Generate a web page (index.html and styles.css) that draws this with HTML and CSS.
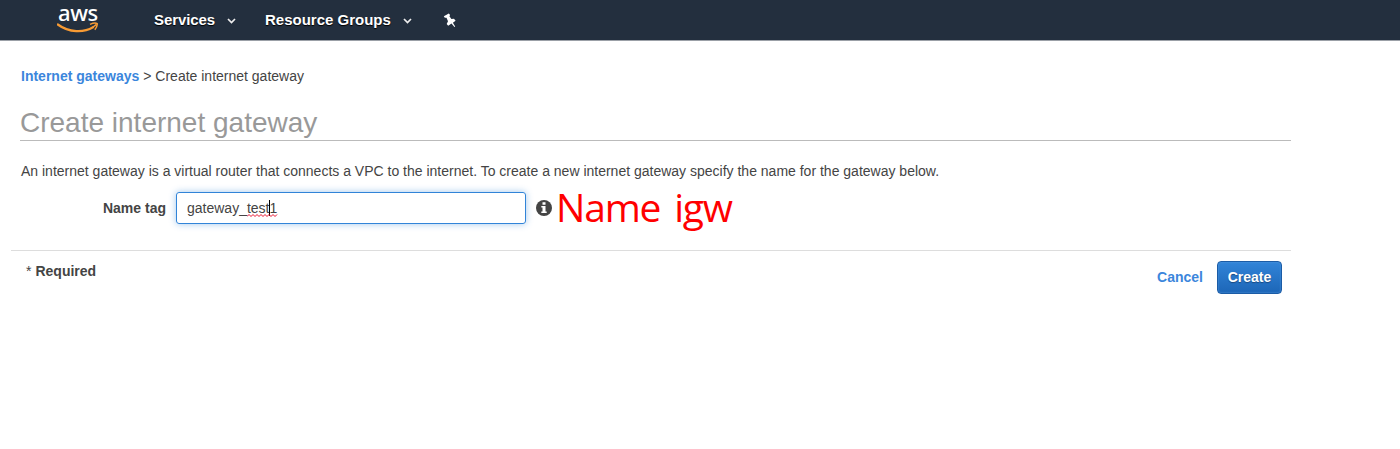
FILE: index.html
```html
<!DOCTYPE html>
<html lang="en">
<head>
<meta charset="utf-8">
<title>Create internet gateway</title>
<link rel="stylesheet" href="styles.css">
</head>
<body>
<header class="topbar">
  <a class="logo"><span class="logo-text">aws</span>
    <svg class="smile" width="42" height="11" viewBox="0 0 42 11"><path d="M.8 2.500C12 10.800 27 10.800 36 5.200" fill="none" stroke="#f79b34" stroke-width="2.200" stroke-linecap="round"/><path d="M33 2.400c3-1.300 6-1.500 7.200-.7.200 1.800-.7 4-2.400 6" fill="none" stroke="#f79b34" stroke-width="1.500"/><path d="M35.500 5.500L39.500 2.300" stroke="#f79b34" stroke-width="1.600"/></svg>
  </a>
  <nav class="nav">
    <a class="nav-item services">Services<svg class="chevron" width="9" height="6" viewBox="0 0 9 6"><path d="M1 1l3.500 3.500L8 1" fill="none" stroke="#eee" stroke-width="1.700"/></svg></a>
    <a class="nav-item groups">Resource Groups<svg class="chevron" width="9" height="6" viewBox="0 0 9 6"><path d="M1 1l3.500 3.500L8 1" fill="none" stroke="#eee" stroke-width="1.700"/></svg></a>
    <svg class="pin" width="14" height="15" viewBox="0 0 14 15"><path d="M.8 3.200L5.800.5l1.300 1.600-.7 1.100 2 2.900 2.600-.3 1.600 2-2.700 1.900 2.300 3.800-.8.500-2.900-3.400-3.300 2.200-1.500-1.900 1.300-2.600-1.500-3.500-1.700-.1z" fill="#fff"/></svg>
  </nav>
</header>
<main class="page">
  <div class="crumbs"><a class="link">Internet gateways</a><span class="crumb-rest">&gt; Create internet gateway</span></div>
  <h1 class="title">Create internet gateway</h1>
  <p class="intro">An internet gateway is a virtual router that connects a VPC to the internet. To create a new internet gateway specify the name for the gateway below.</p>
  <div class="field">
    <label class="label">Name tag</label>
    <div class="input"><span>gateway_</span><span class="misspelt">test<i class="caret"></i>1<svg class="wave" width="31" height="3" viewBox="0 0 31 3"><path d="M0 2.500l2-2 2 2 2-2 2 2 2-2 2 2 2-2 2 2 2-2 2 2 2-2 2 2 2-2 2 2 2-2" fill="none" stroke="#e8112d"/></svg></span></div>
    <svg class="info" width="16" height="16" viewBox="0 0 16 16"><circle cx="8" cy="8" r="8" fill="#444"/><path d="M6.500 2.300h3v2.400h-3zM5.300 6h4.200v5.400h1.200V13H5.300v-1.600h1.200V7.600H5.300z" fill="#fff"/></svg>
    <span class="note">Name igw</span>
  </div>
  <footer class="actions">
    <div class="required"><span class="star">*</span>Required</div>
    <div class="buttons"><a class="link cancel">Cancel</a><button class="create">Create</button></div>
  </footer>
</main>
</body>
</html>
```
FILE: styles.css
```css
* { box-sizing: border-box; }
body {
  margin: 0;
  background: #fff;
  color: #444;
  font: 14px/20px "Liberation Sans", Arial, sans-serif;
}
.topbar {
  display: flex;
  height: 41px;
  background: #232f3e;
  border-bottom: 1px solid #9ba0a7;
}
.logo { width: 42px; margin-left: 57px; display: flex; flex-direction: column; }
.logo-text {
  height: 22px;
  color: #fff;
  text-align: center;
  font: 500 22px/24px "Noto Sans", sans-serif;
  letter-spacing: -.4px;
}
.nav { display: flex; align-items: center; height: 40px; margin-left: 55px; color: #fff; }
.nav-item { display: flex; align-items: center; font-size: 15px; font-weight: bold; text-shadow: 0 1px 1px #000; }
.services { width: 111px; letter-spacing: -.1px; }
.groups { width: 178px; }
.chevron { margin: 2px 0 0 12px; }
.page { padding: 25px 0 0 11px; width: 1291px; }
.crumbs { display: flex; gap: 4px; margin-left: 10px; }
.link { color: #3b86dc; font-weight: bold; }
.title {
  height: 34px;
  margin: 21px 0 0 9px;
  border-bottom: 1px solid #bbb;
  color: #999;
  font-weight: normal;
  font-size: 28px;
  line-height: 31px;
}
.intro { margin: 20px 0 0 10px; white-space: nowrap; }
.field { display: flex; align-items: center; height: 32px; margin-top: 11px; }
.label { width: 155px; text-align: right; font-weight: bold; }
.input {
  display: flex;
  align-items: center;
  width: 350px;
  height: 32px;
  margin-left: 10px;
  padding-left: 10px;
  border: 1px solid #3184d8;
  border-radius: 3px;
  box-shadow: 0 0 7px rgba(49, 132, 216, .45);
}
.misspelt { position: relative; }
.caret { position: absolute; left: 22px; top: 2px; width: 1px; height: 16px; background: #000; }
.wave { position: absolute; left: 0; bottom: 1px; }
.info { margin-left: 10px; }
.note {
  margin: 0 0 3px 4px;
  color: #f00;
  font: 39px/32px "Open Sans", sans-serif;
  letter-spacing: -1.2px;
  word-spacing: 5px;
  white-space: nowrap;
}
.actions {
  display: flex;
  justify-content: space-between;
  height: 54px;
  margin-top: 26px;
  padding: 10px 9px 0 15px;
  border-top: 1px solid #ddd;
}
.required { font-weight: bold; }
.star { margin-right: 4px; font-weight: normal; }
.buttons { display: flex; align-items: center; gap: 14px; height: 33px; }
.cancel { padding-bottom: 1px; }
.create {
  width: 65px;
  height: 33px;
  padding: 0 0 2px;
  border: 1px solid #1b5ca6;
  border-radius: 4px;
  background: linear-gradient(#3184d8, #1d66b7);
  box-shadow: inset 0 0 2px #5a9de0;
  color: #fff;
  font: bold 14px "Liberation Sans", Arial, sans-serif;
  text-shadow: 0 1px 1px #1b4a80;
}
```
